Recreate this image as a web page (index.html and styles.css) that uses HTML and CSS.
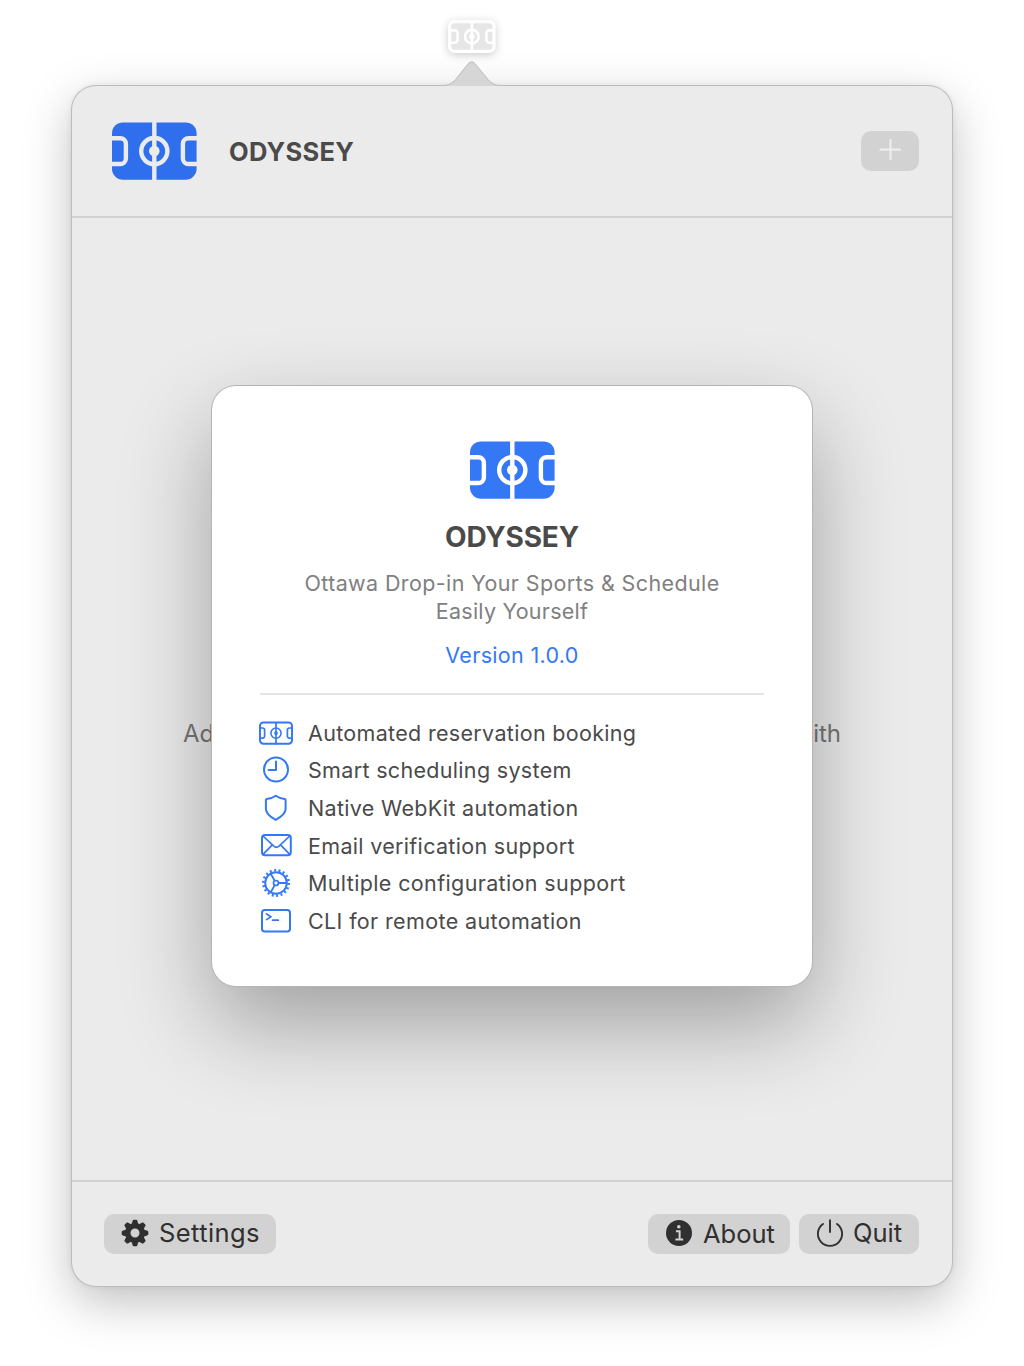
FILE: index.html
```html
<!DOCTYPE html>
<html lang="en">
<head>
<meta charset="utf-8">
<title>ODYSSEY</title>
<link rel="stylesheet" href="styles.css">
</head>
<body>
<svg class="defs" width="0" height="0">
  <symbol id="logo" viewBox="0 0 85 58">
    <rect x="0" y="0.4" width="84.6" height="57.3" rx="11" fill="var(--blue)"/>
    <g fill="none" stroke="var(--cut)" stroke-width="4.4">
      <path d="M42.3 0V58M-3 16.2H8.3a5.6 5.6 0 0 1 5.6 5.6v14.6a5.6 5.6 0 0 1-5.6 5.6H-3M88 16.2H76.5a5.6 5.6 0 0 0-5.6 5.6v14.6a5.6 5.6 0 0 0 5.6 5.6H88"/>
      <circle cx="42.3" cy="29.1" r="13.1"/>
    </g>
    <circle cx="42.3" cy="29.1" r="5.3" fill="var(--cut)"/>
  </symbol>
  <symbol id="pitch" viewBox="0 0 36 24">
    <g fill="none" stroke="currentColor" stroke-width="2">
      <rect x="2" y="1.5" width="32" height="21.2" rx="3.4"/>
      <path stroke-width="1.7" d="M18 1.5V22.700M2 7h2.600a2 2 0 0 1 2 2v6.200a2 2 0 0 1-2 2H2M34 7h-2.600a2 2 0 0 0-2 2v6.200a2 2 0 0 0 2 2h2.600"/>
      <circle cx="18" cy="12.100" r="5.100" stroke-width="1.600"/>
    </g>
    <circle cx="18" cy="12.100" r="1.900" stroke="none" fill="currentColor"/>
  </symbol>
</svg>

<div class="menubar">
  <svg class="menubar-icon" viewBox="0 0 48 34" width="48" height="34">
    <rect x="1.700" y="1.700" width="44.300" height="29.600" rx="4.500" fill="#e6e6e6" stroke="#fff" stroke-width="3.200"/>
    <g fill="none" stroke="#fff" stroke-width="2.600">
      <path d="M23.900 2V31M2 10.400h4.600a3 3 0 0 1 3 3v6.400a3 3 0 0 1-3 3H2M46 10.400h-4.600a3 3 0 0 0-3 3v6.400a3 3 0 0 0 3 3H46"/>
      <circle cx="23.900" cy="16.600" r="6.800"/>
    </g>
    <circle cx="23.900" cy="16.600" r="2.800" fill="#fff"/>
  </svg>
</div>

<main class="popover">
  <svg class="arrow" viewBox="0 0 64 26" width="64" height="26">
    <path d="M3 25.500C9 25.200 12 23.500 15.500 19.500L28 4Q31.700 -.5 35.400 4L48 19.500C51.500 23.500 54.500 25.200 60.500 25.500V26H3Z" fill="#d6d6d6"/>
    <path d="M0 25.500H3C9 25.200 12 23.500 15.500 19.500L28 4Q31.700 -.5 35.400 4L48 19.500C51.500 23.500 54.500 25.200 60.500 25.500H64" fill="none" stroke="#bcbcbc"/>
  </svg>

  <header class="header">
    <svg class="logo"><use href="#logo"/></svg>
    <h1 class="title">ODYSSEY</h1>
    <button class="btn btn-add" aria-label="Add">
      <svg width="22" height="22" viewBox="0 0 22 22"><path d="M11.500 1V20.500M1.500 10.700H21" stroke="#ededed" stroke-width="2.200" stroke-linecap="round"/></svg>
    </button>
  </header>

  <section class="content">
    <p class="hint"><span>Ad</span><span>ith</span></p>
  </section>

  <footer class="footer">
    <button class="btn btn-settings">
      <svg width="28" height="28" viewBox="-14 -14 28 28" fill="#303030">
        <path fill-rule="evenodd" d="M0-10A10 10 0 1 1 0 10A10 10 0 1 1 0-10ZM0-4.500A4.500 4.500 0 1 0 0 4.500A4.500 4.500 0 1 0 0-4.500Z"/>
        <path id="tooth" d="M-3.400-8.500L-2.300-12.500Q-2-13.300-1.200-13.300H1.200Q2-13.300 2.300-12.500L3.400-8.500Z"/>
        <use href="#tooth" transform="rotate(45)"/><use href="#tooth" transform="rotate(90)"/><use href="#tooth" transform="rotate(135)"/>
        <use href="#tooth" transform="rotate(180)"/><use href="#tooth" transform="rotate(225)"/><use href="#tooth" transform="rotate(270)"/><use href="#tooth" transform="rotate(315)"/>
      </svg>
      <span>Settings</span>
    </button>
    <span class="spacer"></span>
    <button class="btn btn-about">
      <svg width="28" height="28" viewBox="0 0 28 28"><circle cx="14" cy="14" r="13" fill="#303030"/><circle cx="13.800" cy="7.800" r="1.800" fill="#d2d2d2"/><path d="M10.900 12.200H14.600V20.300M10.400 20.500H18.200" fill="none" stroke="#d2d2d2" stroke-width="2"/></svg>
      <span>About</span>
    </button>
    <button class="btn btn-quit">
      <svg width="28" height="28" viewBox="0 0 28 28" fill="none" stroke="#303030" stroke-width="1.900" stroke-linecap="round"><path d="M14 1.200V13M7 4.900A12.100 12.100 0 1 0 21 4.900"/></svg>
      <span>Quit</span>
    </button>
  </footer>

  <div class="about" role="dialog">
    <svg class="logo"><use href="#logo"/></svg>
    <h2 class="about-title">ODYSSEY</h2>
    <p class="tagline">Ottawa Drop-in Your Sports &amp; Schedule<br><span class="tagline-end">Easily Yourself</span></p>
    <p class="version">Version 1.0.0</p>
    <ul class="features">
      <li><svg class="pitch"><use href="#pitch"/></svg><span>Automated reservation booking</span></li>
      <li><svg viewBox="0 0 36 28"><circle cx="18" cy="13.500" r="12"/><path d="M18 5.500V14H10.600"/></svg><span>Smart scheduling system</span></li>
      <li><svg viewBox="0 0 36 28"><path d="M17.700 1.700C20 3.400 23.500 4.500 26.800 4.900Q27.600 5 27.600 6V15C27.600 20 22 23.500 17.700 25.800C13.400 23.500 7.900 20 7.900 15V6Q7.900 5 8.700 4.900C12 4.500 15.500 3.400 17.700 1.700Z"/></svg><span>Native WebKit automation</span></li>
      <li><svg viewBox="0 0 36 28"><rect x="4" y="3" width="28.800" height="20.200" rx="3"/><path d="M5 4L15.800 14.100Q18.400 16.400 21 14.100L31.800 4M5 22.300L14.300 12.900M31.800 22.300L22.500 12.900" stroke-width="1.700"/></svg><span>Email verification support</span></li>
      <li class="wide"><svg viewBox="0 0 36 28"><circle cx="18" cy="14" r="10.800"/><circle cx="18" cy="14" r="12.700" stroke-width="2.600" stroke-linecap="butt" stroke-dasharray="1.900 2.533"/><circle cx="18" cy="14" r="2.500" stroke-width="1.700"/><path d="M20.500 14H28.500M16.700 11.800L12.700 4.800M16.700 16.200L12.700 23.200" stroke-width="1.800"/></svg><span>Multiple configuration support</span></li>
      <li class="wide"><svg viewBox="0 0 36 28"><rect x="4" y="3.100" width="28" height="21.400" rx="2.800"/><path d="M8.500 7L13 9.800L8.500 12.600M14.600 13.200H20.300" stroke-width="1.700"/></svg><span>CLI for remote automation</span></li>
    </ul>
  </div>
</main>
</body>
</html>
```
FILE: styles.css
```css
:root {
  --blue: #2f6fed;
  --cut: #ebebeb;
}
* { box-sizing: border-box; margin: 0; padding: 0; }
body {
  width: 1024px;
  height: 1366px;
  overflow: hidden;
  background: #fff;
  font-family: Inter, "Liberation Sans", sans-serif;
  color: #4a4a4a;
}
.defs { display: block; }
.menubar {
  height: 86px;
  padding: 20px 0 0 448px;
}
.menubar-icon {
  display: block;
  overflow: visible;
  filter: drop-shadow(0 2px 4px rgba(0, 0, 0, .2));
}
.popover {
  position: relative;
  display: flex;
  flex-direction: column;
  width: 880px;
  height: 1200px;
  margin: 0 auto;
  border-radius: 24px;
  background: #ebebeb;
  box-shadow: 0 0 0 1px #bcbcbc, 0 0 6px rgba(0, 0, 0, .1), 0 16px 48px rgba(0, 0, 0, .25);
}
.arrow {
  position: absolute;
  left: 368px;
  top: -26px;
}
.logo { display: block; width: 85px; height: 58px; }
.header {
  display: flex;
  align-items: center;
  height: 132px;
  padding: 0 33px 0 40px;
  border-bottom: 2px solid #d2d2d2;
}
.title {
  flex: 1;
  margin-left: 32px;
  padding-top: 2px;
  font-size: 25.5px;
  font-weight: 700;
  line-height: 32px;
  letter-spacing: .3px;
}
.btn {
  display: flex;
  align-items: center;
  height: 40px;
  gap: 10px;
  padding: 0 0 0 17px;
  border: 0;
  border-radius: 10px;
  background: #d2d2d2;
  color: #303030;
  font: 400 25.5px/38px Inter, "Liberation Sans", sans-serif;
}
.btn svg { flex: none; display: block; position: relative; top: -1px; }
.btn-add { width: 58px; justify-content: center; padding: 0; }
.btn-settings { width: 172px; letter-spacing: .4px; line-height: 36px; }
.btn-settings span, .btn-quit span { padding-bottom: 2px; }
.btn-about { width: 142px; }
.btn-quit { width: 120px; margin-left: 9px; gap: 9px; }
.content {
  flex: 1;
  padding: 499px 111px 0;
}
.hint {
  display: flex;
  justify-content: space-between;
  font-size: 24px;
  line-height: 34px;
  color: #757575;
}
.footer {
  display: flex;
  align-items: center;
  height: 106px;
  padding: 0 33px 0 32px;
  border-top: 2px solid #d2d2d2;
}
.spacer { flex: 1; }
.about {
  --blue: #3478f6;
  --cut: #fff;
  position: absolute;
  left: 140px;
  top: 300px;
  display: flex;
  flex-direction: column;
  align-items: center;
  width: 600px;
  height: 600px;
  padding: 55px 48px 0;
  border-radius: 24px;
  background: #fff;
  box-shadow: 0 0 0 1px #b4b4b4, 0 38px 90px rgba(0, 0, 0, .32);
}
.about-title {
  margin-top: 20px;
  font-size: 28px;
  font-weight: 700;
  line-height: 36px;
  letter-spacing: -.2px;
}
.tagline {
  margin-top: 14px;
  font-size: 21.5px;
  line-height: 28px;
  letter-spacing: .38px;
  text-align: center;
  white-space: nowrap;
  color: #808080;
}
.tagline-end { letter-spacing: .25px; }
.version {
  margin-top: 16px;
  font-size: 21.5px;
  line-height: 28px;
  letter-spacing: .32px;
  color: #3478f6;
}
.features {
  width: 100%;
  margin-top: 24px;
  padding-top: 19px;
  border-top: 2px solid #e5e5e5;
  list-style: none;
}
.features li {
  display: flex;
  align-items: center;
  height: 37.6px;
  margin-left: -2px;
  gap: 14px;
  font-size: 21.5px;
  letter-spacing: .32px;
  white-space: nowrap;
}
.features .wide { letter-spacing: .37px; }
.features svg {
  flex: none;
  width: 36px;
  height: 28px;
  fill: none;
  stroke: #3478f6;
  stroke-width: 2;
  stroke-linejoin: round;
  stroke-linecap: round;
  color: #3478f6;
}
.features .pitch { height: 24px; }
```
